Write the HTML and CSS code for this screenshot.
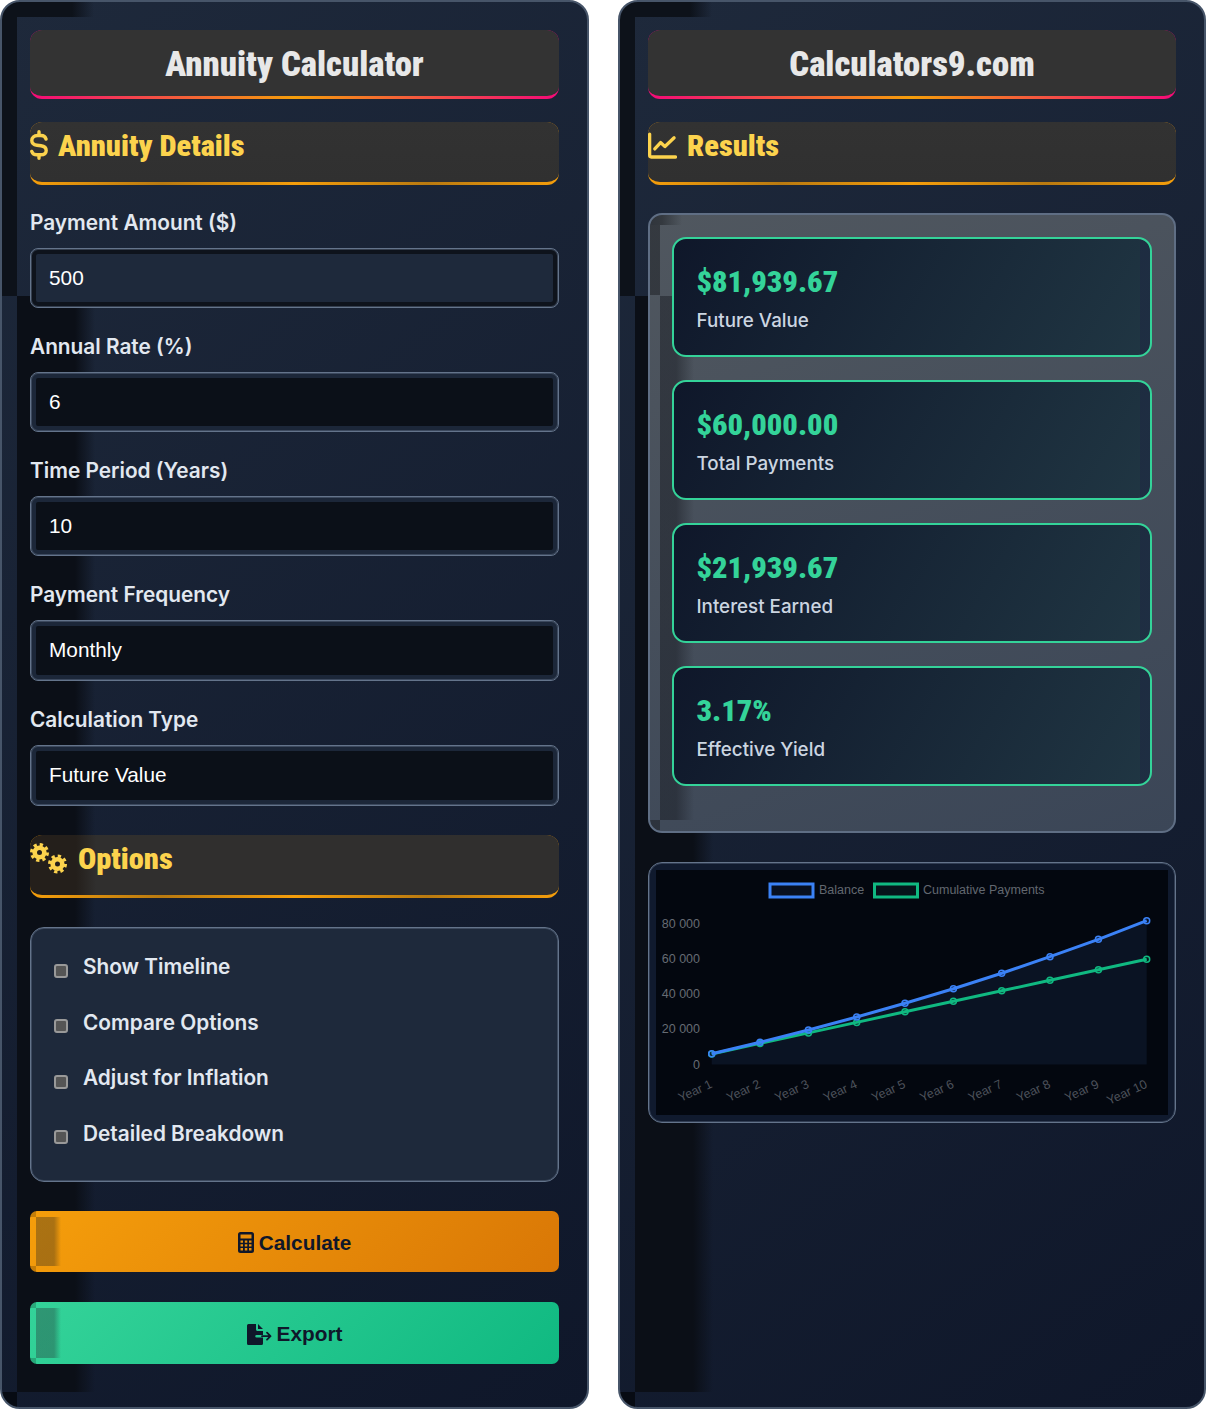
FILE: index.html
```html
<!DOCTYPE html>
<html lang="en">
<head>
    <meta charset="UTF-8">
    <meta name="viewport" content="width=device-width, initial-scale=1.0">
    <title>Annuity Calculator</title>
    <link rel="stylesheet" href="styles.css">
</head>
<body>
    <div class="page">
        <div class="panel">
            <h1 class="panel-title"><span class="condensed">Annuity Calculator</span></h1>

            <h2 class="section-title">
                <svg class="section-icon" width="18" height="30" viewBox="0 0 18 30" fill="none" stroke="#fcd34d" stroke-width="3.400" stroke-linecap="round">
                    <path d="M9 1.700v3.500M9 24.800v3.500"/>
                    <path d="M16 9C15.400 6.700 13.400 5.500 11 5.500H7.500C4 5.500 1.800 7.600 1.800 10.400S4 14.700 7 15.200l4 .6c3.200.5 5.200 2 5.200 4.700s-2.200 4.300-5.700 4.300H7C4.500 24.800 2.500 23.600 1.800 21.400"/>
                </svg>
                <span class="condensed">Annuity Details</span>
            </h2>

            <div class="form-group">
                <label for="amount">Payment Amount ($)</label>
                <input class="field active" id="amount" type="text" value="500" autocomplete="off">
            </div>
            <div class="form-group">
                <label for="rate">Annual Rate (%)</label>
                <input class="field" id="rate" type="text" value="6" autocomplete="off">
            </div>
            <div class="form-group">
                <label for="years">Time Period (Years)</label>
                <input class="field" id="years" type="text" value="10" autocomplete="off">
            </div>
            <div class="form-group">
                <label for="frequency">Payment Frequency</label>
                <select class="field select" id="frequency">
                    <option>Monthly</option>
                    <option>Quarterly</option>
                    <option>Annually</option>
                </select>
            </div>
            <div class="form-group last">
                <label for="type">Calculation Type</label>
                <select class="field select" id="type">
                    <option>Future Value</option>
                    <option>Present Value</option>
                </select>
            </div>

            <h2 class="section-title dimmed">
                <svg class="section-icon" width="37" height="31" viewBox="0 0 37 31" fill="none" stroke="#fcd34d">
                    <circle cx="9.500" cy="9.500" r="4.800" stroke-width="4.600"/>
                    <circle cx="9.500" cy="9.500" r="8" stroke-width="3" stroke-dasharray="3.300 2.980"/>
                    <circle cx="27.500" cy="21" r="4.800" stroke-width="4.600"/>
                    <circle cx="27.500" cy="21" r="8" stroke-width="3" stroke-dasharray="3.300 2.980"/>
                </svg>
                <span class="condensed">Options</span>
            </h2>

            <div class="options">
                <label class="option"><input type="checkbox"><span>Show Timeline</span></label>
                <label class="option"><input type="checkbox"><span>Compare Options</span></label>
                <label class="option"><input type="checkbox"><span>Adjust for Inflation</span></label>
                <label class="option"><input type="checkbox"><span>Detailed Breakdown</span></label>
            </div>

            <button class="btn btn-calculate">
                <svg width="16" height="21" viewBox="0 0 16 21">
                    <path fill="#0f172a" fill-rule="evenodd" d="M2.500 0h11A2.500 2.500 0 0 1 16 2.500v16a2.500 2.500 0 0 1-2.500 2.500h-11A2.500 2.500 0 0 1 0 18.500v-16A2.500 2.500 0 0 1 2.500 0zM2.500 2.500v4h11v-4zM2.500 8.500v2.300h2.500v-2.300zM6.800 8.500v2.300h2.500v-2.300zM11 8.500v2.300h2.500v-2.300zM2.500 12.300v2.300h2.500v-2.300zM6.800 12.300v2.300h2.500v-2.300zM11 12.300v2.300h2.500v-2.300zM2.500 16.100v2.300h2.500v-2.300zM6.800 16.100v2.300h2.500v-2.300zM11 16.100v2.300h2.500v-2.300z"/>
                </svg>
                Calculate
            </button>
            <button class="btn btn-export">
                <svg width="25" height="21" viewBox="0 0 25 21">
                    <path fill="#0f172a" d="M1.500 0H9v5.500c0 .8.700 1.500 1.500 1.500H16v4H9.500a1.250 1.250 0 0 0 0 2.500H16V19.500a1.500 1.500 0 0 1-1.500 1.500h-13A1.500 1.500 0 0 1 0 19.500v-18A1.500 1.500 0 0 1 1.500 0zM11 0l5 5h-5z"/>
                    <path fill="none" stroke="#0f172a" stroke-width="1.800" stroke-linecap="round" stroke-linejoin="round" d="M15 12.200h8.500M20 8.700l3.500 3.500-3.500 3.500"/>
                </svg>
                Export
            </button>
        </div>

        <div class="panel">
            <h1 class="panel-title"><span class="condensed">Calculators9.com</span></h1>

            <h2 class="section-title">
                <svg class="section-icon" width="29" height="27" viewBox="0 0 30 27" fill="none" stroke="#fcd34d" stroke-width="3.400" stroke-linecap="round" stroke-linejoin="round">
                    <path d="M1.700 1.700v22a1.700 1.700 0 0 0 1.700 1.700h25"/>
                    <path d="M7 17l6-6.500 4.500 4L27 5.500"/>
                </svg>
                <span class="condensed">Results</span>
            </h2>

            <div class="results">
                <div class="result-card">
                    <div class="result-value"><span class="condensed">$81,939.67</span></div>
                    <div class="result-label">Future Value</div>
                </div>
                <div class="result-card">
                    <div class="result-value"><span class="condensed">$60,000.00</span></div>
                    <div class="result-label">Total Payments</div>
                </div>
                <div class="result-card">
                    <div class="result-value"><span class="condensed">$21,939.67</span></div>
                    <div class="result-label">Interest Earned</div>
                </div>
                <div class="result-card">
                    <div class="result-value"><span class="condensed">3.17%</span></div>
                    <div class="result-label">Effective Yield</div>
                </div>
            </div>

            <div class="chart-box">
                <svg class="chart" width="512" height="245" viewBox="656 870 512 245">
                    <rect x="770" y="884" width="43" height="13" fill="#081020" stroke="#3b82f6" stroke-width="3"/>
                    <text class="legend-text" x="819" y="894">Balance</text>
                    <rect x="874.500" y="884" width="43" height="13" fill="#06141a" stroke="#10b981" stroke-width="3"/>
                    <text class="legend-text" x="923" y="894">Cumulative Payments</text>

                    <text class="tick" x="700" y="928">80 000</text>
                    <text class="tick" x="700" y="963">60 000</text>
                    <text class="tick" x="700" y="998">40 000</text>
                    <text class="tick" x="700" y="1033">20 000</text>
                    <text class="tick" x="700" y="1068.500">0</text>

                    <polygon fill="#0a1323" points="711.700,1064.500 711.700,1053.700 760,1042.200 808.400,1030 856.700,1017 905,1003.300 953.400,988.700 1001.700,973.200 1050,956.700 1098.400,939.300 1146.700,920.700 1146.700,1064.500"/>

                    <polyline class="line-payments" points="711.700,1054 760,1043.400 808.400,1032.900 856.700,1022.400 905,1011.800 953.400,1001.300 1001.700,990.800 1050,980.300 1098.400,969.700 1146.700,959.200"/>
                    <g class="dots-payments">
                        <circle cx="711.700" cy="1054" r="3"/><circle cx="760" cy="1043.400" r="3"/><circle cx="808.400" cy="1032.900" r="3"/><circle cx="856.700" cy="1022.400" r="3"/><circle cx="905" cy="1011.800" r="3"/><circle cx="953.400" cy="1001.300" r="3"/><circle cx="1001.700" cy="990.800" r="3"/><circle cx="1050" cy="980.300" r="3"/><circle cx="1098.400" cy="969.700" r="3"/><circle cx="1146.700" cy="959.200" r="3"/>
                    </g>
                    <polyline class="line-balance" points="711.700,1053.700 760,1042.200 808.400,1030 856.700,1017 905,1003.300 953.400,988.700 1001.700,973.200 1050,956.700 1098.400,939.300 1146.700,920.700"/>
                    <g class="dots-balance">
                        <circle cx="711.700" cy="1053.700" r="3"/><circle cx="760" cy="1042.200" r="3"/><circle cx="808.400" cy="1030" r="3"/><circle cx="856.700" cy="1017" r="3"/><circle cx="905" cy="1003.300" r="3"/><circle cx="953.400" cy="988.700" r="3"/><circle cx="1001.700" cy="973.200" r="3"/><circle cx="1050" cy="956.700" r="3"/><circle cx="1098.400" cy="939.300" r="3"/><circle cx="1146.700" cy="920.700" r="3"/>
                    </g>

                    <text class="year" transform="rotate(-25 713 1087)" x="713" y="1087">Year 1</text>
                    <text class="year" transform="rotate(-25 761.300 1087)" x="761.300" y="1087">Year 2</text>
                    <text class="year" transform="rotate(-25 809.700 1087)" x="809.700" y="1087">Year 3</text>
                    <text class="year" transform="rotate(-25 858 1087)" x="858" y="1087">Year 4</text>
                    <text class="year" transform="rotate(-25 906.300 1087)" x="906.300" y="1087">Year 5</text>
                    <text class="year" transform="rotate(-25 954.700 1087)" x="954.700" y="1087">Year 6</text>
                    <text class="year" transform="rotate(-25 1003 1087)" x="1003" y="1087">Year 7</text>
                    <text class="year" transform="rotate(-25 1051.300 1087)" x="1051.300" y="1087">Year 8</text>
                    <text class="year" transform="rotate(-25 1099.700 1087)" x="1099.700" y="1087">Year 9</text>
                    <text class="year" transform="rotate(-25 1148 1087)" x="1148" y="1087">Year 10</text>
                </svg>
            </div>
        </div>
    </div>
</body>
</html>
```

FILE: styles.css
```css
* {
    margin: 0;
    padding: 0;
    box-sizing: border-box;
}

body {
    background-color: white;
    font-family: 'Inter', 'Liberation Sans', sans-serif;
}

.page {
    display: grid;
    grid-template-columns: 589px 588px;
    justify-content: space-between;
    height: 1409px;
}

.panel {
    padding: 28px;
    border: 2px solid #475569;
    border-radius: 20px;
    background-color: #141d30;
    background-image:
        linear-gradient(90deg, #0d121a 0, #0d121a 70px, transparent 92px),
        linear-gradient(#0d121a, #0d121a),
        linear-gradient(90deg, #0b0f17 0, #0b0f17 58px, transparent 78px),
        linear-gradient(#070b13, #070b13),
        linear-gradient(145deg, #1e293b, #0f172a);
    background-repeat: no-repeat;
    background-size: 92px 15px, 15px 279px, 78px 1096px, 15px 15px, 100% 100%;
    background-position: 0 0, 0 15px, 15px 294px, 0 1390px, 0 0;
}

.condensed {
    display: inline-block;
    font-family: 'Roboto Condensed', 'Roboto', sans-serif;
    font-stretch: condensed;
    font-weight: 900;
}

.panel-title {
    display: flex;
    align-items: center;
    justify-content: center;
    height: 69px;
    margin-bottom: 23px;
    padding-top: 2px;
    border-bottom: 3px solid transparent;
    border-radius: 12px;
    background:
        linear-gradient(#333, #333) padding-box,
        linear-gradient(90deg, #f50a78, #f59e0b 50%, #f50a78) border-box;
    color: #e8e8e8;
    font-size: 34.700px;
    font-weight: 900;
}

.section-title {
    display: flex;
    align-items: center;
    gap: 10px;
    height: 63px;
    margin-bottom: 29px;
    padding-bottom: 14px;
    border-bottom: 3px solid transparent;
    border-radius: 12px;
    background:
        linear-gradient(#323232, #303030) padding-box,
        linear-gradient(90deg, #f59e0b, #b97a10 25%, #f59e0b 50%, #b97a10 75%, #f59e0b) border-box;
    color: #fcd34d;
    font-size: 30.400px;
    font-weight: 900;
}

.section-title.dimmed {
    gap: 11px;
    background:
        linear-gradient(90deg, #241f1b 0, #241f1b 46px, #302f2e 66px) padding-box,
        linear-gradient(90deg, #f59e0b, #b97a10 25%, #f59e0b 50%, #b97a10 75%, #f59e0b) border-box;
}

.form-group {
    margin-bottom: 30px;
}

.form-group.last {
    margin-bottom: 29px;
}

.form-group label {
    display: block;
    height: 26px;
    margin-bottom: 8px;
    color: #e2e8f0;
    font-size: 20.800px;
    font-weight: 600;
    line-height: 18px;
}

.field {
    display: block;
    width: 100%;
    height: 60px;
    padding: 0 18px;
    border: 1px solid #64748b;
    border-radius: 8px;
    outline: none;
    background-color: #0b1018;
    box-shadow: inset 0 0 0 1px rgba(100, 116, 139, 0.45), inset 0 0 0 5px #1c2739;
    color: white;
    font-family: 'Liberation Sans', sans-serif;
    font-size: 20.800px;
}

.field.active {
    background-color: #1e293b;
    box-shadow: inset 0 0 0 1px rgba(100, 116, 139, 0.45), inset 0 0 0 5px #0e131c;
}

.field.select {
    height: 61px;
    padding-bottom: 2px;
    appearance: none;
}

.options {
    display: flex;
    flex-direction: column;
    height: 255px;
    margin-bottom: 29px;
    padding: 13px 23px 18px;
    border: 1px solid #64748b;
    border-radius: 14px;
    background-color: #1e293b;
    box-shadow: inset 0 0 0 1px rgba(100, 116, 139, 0.45);
}

.option {
    display: flex;
    flex: 1;
    align-items: center;
    gap: 15px;
    color: #e2e8f0;
    font-size: 20.800px;
    font-weight: 600;
}

.option span {
    position: relative;
    top: -2px;
}

.option input {
    width: 14px;
    height: 14px;
    margin-top: 4px;
    border: 2px solid #999;
    border-radius: 3px;
    background-color: #555;
    appearance: none;
}

.btn {
    display: flex;
    align-items: center;
    justify-content: center;
    gap: 5px;
    width: 100%;
    height: 61px;
    margin-bottom: 30px;
    padding-top: 2px;
    border: none;
    border-radius: 7px;
    color: #0f172a;
    font-family: 'Liberation Sans', sans-serif;
    font-size: 20.800px;
    font-weight: 700;
    background-repeat: no-repeat;
    background-size: 25px calc(100% - 12px), 6px 6px, 6px 6px, 100% 100%;
    background-position: 6px 6px, 0 0, 0 100%, 0 0;
}

.btn-calculate {
    background-image:
        linear-gradient(90deg, rgba(60, 50, 30, 0.4) 18px, transparent 25px),
        linear-gradient(rgba(0, 0, 0, 0.2), rgba(0, 0, 0, 0.2)),
        linear-gradient(rgba(0, 0, 0, 0.2), rgba(0, 0, 0, 0.2)),
        linear-gradient(135deg, #f59e0b, #d97706);
}

.btn-export {
    height: 62px;
    margin-bottom: 0;
    background-image:
        linear-gradient(90deg, rgba(40, 60, 60, 0.4) 18px, transparent 25px),
        linear-gradient(rgba(0, 0, 0, 0.2), rgba(0, 0, 0, 0.2)),
        linear-gradient(rgba(0, 0, 0, 0.2), rgba(0, 0, 0, 0.2)),
        linear-gradient(135deg, #34d399, #10b981);
}

.results {
    display: flex;
    flex-direction: column;
    gap: 23px;
    height: 620px;
    margin-top: -1px;
    margin-bottom: 29px;
    padding: 22px;
    border: 2px solid #5f6e84;
    border-radius: 14px;
    background-image:
        linear-gradient(90deg, #30353c 0, #34393f 12px, transparent 32px),
        linear-gradient(rgba(30, 33, 38, 0.55), rgba(30, 33, 38, 0.55)),
        linear-gradient(90deg, rgba(25, 28, 35, 0.5) 0, rgba(25, 28, 35, 0.5) 16px, transparent 34px),
        linear-gradient(rgba(30, 33, 38, 0.55), rgba(30, 33, 38, 0.55)),
        linear-gradient(160deg, #50575f, #3b4657);
    background-repeat: no-repeat;
    background-size: 32px 10px, 10px 70px, 34px 524px, 10px 10px, 100% 100%;
    background-position: 0 0, 0 10px, 10px 81px, 0 605px, 0 0;
}

.result-card {
    flex: none;
    height: 120px;
    padding: 22px 22.500px;
    border: 2px solid #34d399;
    border-radius: 14px;
    background-image:
        linear-gradient(rgba(30, 41, 66, 0.6), rgba(30, 41, 66, 0.6)),
        linear-gradient(120deg, #0f172a, #203643);
    background-repeat: no-repeat;
    background-size: 10px 100%, 100% 100%;
    background-position: 100% 0, 0 0;
}

.result-value {
    margin-bottom: 7px;
    color: #34d399;
    font-size: 30.400px;
    font-weight: 900;
    line-height: 40px;
}

.result-label {
    color: #cbd5e1;
    font-size: 18.800px;
    font-weight: 500;
    line-height: 24px;
}

.chart-box {
    height: 261px;
    padding: 7px;
    border: 1px solid #64748b;
    border-radius: 14px;
    background-color: #101a2e;
    box-shadow: inset 0 0 0 1px rgba(100, 116, 139, 0.4);
}

.chart {
    display: block;
    background-color: #03070f;
    font-family: 'Liberation Sans', sans-serif;
}

.legend-text {
    fill: #62676f;
    font-size: 12.500px;
}

.tick {
    fill: #666b73;
    font-size: 12.500px;
    text-anchor: end;
}

.year {
    fill: #4d525b;
    font-size: 12.500px;
    text-anchor: end;
}

.line-balance {
    fill: none;
    stroke: #3b82f6;
    stroke-width: 3;
}

.line-payments {
    fill: none;
    stroke: #10b981;
    stroke-width: 3;
}

.dots-balance circle {
    fill: rgba(59, 130, 246, 0.1);
    stroke: #3b82f6;
    stroke-width: 1.500;
}

.dots-payments circle {
    fill: rgba(16, 185, 129, 0.1);
    stroke: #10b981;
    stroke-width: 1.500;
}
```
